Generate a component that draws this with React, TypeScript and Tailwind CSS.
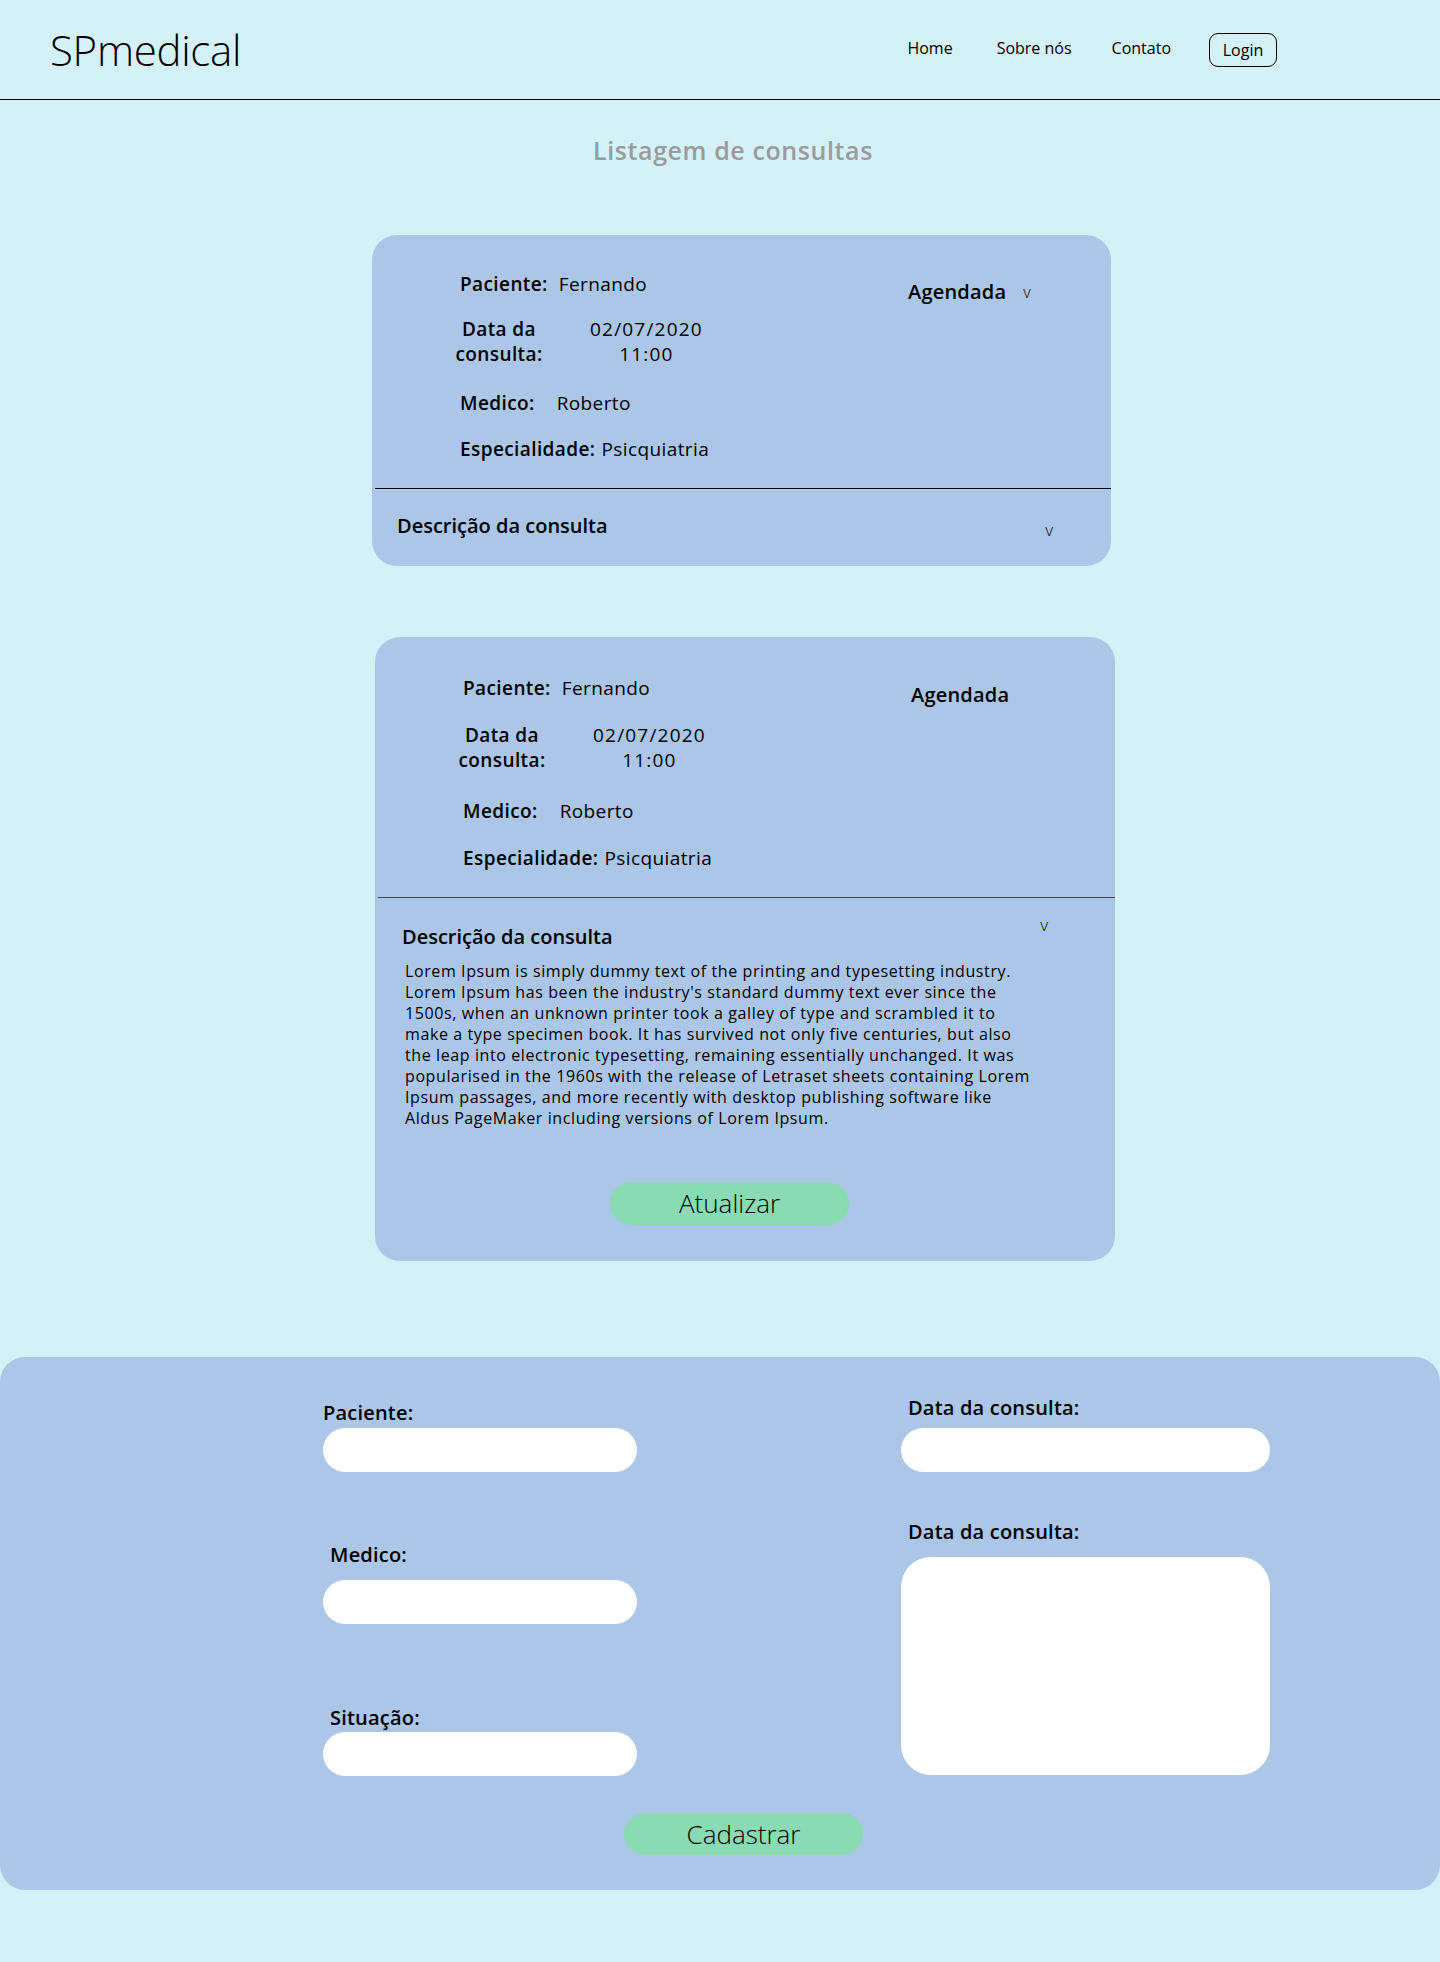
const lorem = [
  'Lorem Ipsum is simply dummy text of the printing and typesetting industry.',
  "Lorem Ipsum has been the industry's standard dummy text ever since the",
  '1500s, when an unknown printer took a galley of type and scrambled it to',
  'make a type specimen book. It has survived not only five centuries, but also',
  'the leap into electronic typesetting, remaining essentially unchanged. It was',
  'popularised in the 1960s with the release of Letraset sheets containing Lorem',
  'Ipsum passages, and more recently with desktop publishing software like',
  'Aldus PageMaker including versions of Lorem Ipsum.'
];

const Header = () => <header className="h-[99px] border-b border-black flex items-center box-content">
    <h1 className="ml-[50px] text-[42px] font-light tracking-[-0.3px]">SPmedical</h1>
    <nav className="ml-auto mr-[163px] flex items-center text-[16px]">
      <a className="mb-[3px]">Home</a>
      <a className="ml-[44px] mb-[3px]">Sobre nós</a>
      <a className="ml-[40px] mb-[3px]">Contato</a>
      <button className="ml-[38px] h-[34px] w-[68px] rounded-[9px] border border-black font-medium">
        Login
      </button>
    </nav>
  </header>;

interface Spacing {
  top: string;
  dataGap: string;
  medicoGap: string;
  espGap: string;
  bottomPad: string;
  statusTop: string;
}

const Details = ({ s, arrow }: { s: Spacing; arrow: boolean }) => <div className={`flex items-start pl-[88px] ${s.top} ${s.bottomPad}`}>
    <div className="w-[448px] flex flex-col text-[19px] leading-[25px] tracking-[0.4px]">
      <div className="flex">
        <span className="font-semibold">Paciente:</span>
        <span className="ml-[11px]">Fernando</span>
      </div>
      <div className={`flex -ml-[6px] ${s.dataGap}`}>
        <span className="w-[90px] text-center font-semibold">
          Data da
          <br />
          consulta:
        </span>
        <span className="ml-[46px] text-center tracking-[1.2px]">
          02/07/2020
          <br />
          11:00
        </span>
      </div>
      <div className={`flex ${s.medicoGap}`}>
        <span className="font-semibold">Medico:</span>
        <span className="ml-[22px]">Roberto</span>
      </div>
      <div className={`flex ${s.espGap}`}>
        <span className="font-semibold">Especialidade:</span>
        <span className="ml-[6px]">Psicquiatria</span>
      </div>
    </div>
    <div className={`flex items-center ${s.statusTop}`}>
      <span className="text-[20px] leading-[26px] font-semibold tracking-[0.2px]">Agendada</span>
      {arrow && <span className="ml-[17px] text-[16px] font-light">v</span>}
    </div>
  </div>;

const ConsultaFechada = () => <section className="ml-[372px] w-[739px] rounded-[25px] bg-[#abc6e6]">
    <Details arrow s={{
    top: 'pt-[37px]',
    dataGap: 'mt-[20px]',
    medicoGap: 'mt-[24px]',
    espGap: 'mt-[21px]',
    bottomPad: 'pb-[26px]',
    statusTop: 'mt-[7px]'
  }} />
    <div className="ml-[3px] border-t border-black" />
    <div className="flex items-start pl-[25px] pt-[24px] pb-[23px]">
      <h3 className="text-[20px] leading-[26px] font-semibold">Descrição da consulta</h3>
      <span className="ml-auto mr-[58px] mt-[4px] text-[17px] leading-[26px] font-light">v</span>
    </div>
  </section>;

const ConsultaAberta = () => <section className="ml-[375px] w-[740px] rounded-[25px] bg-[#abc6e6]">
    <Details arrow={false} s={{
    top: 'pt-[39px]',
    dataGap: 'mt-[22px]',
    medicoGap: 'mt-[26px]',
    espGap: 'mt-[22px]',
    bottomPad: 'pb-[26px]',
    statusTop: 'mt-[6px]'
  }} />
    <div className="ml-[3px] border-t border-[#3f4652]" />
    <div className="pt-[26px] pb-[36px]">
      <div className="flex items-start pl-[27px]">
        <h3 className="text-[20px] leading-[26px] font-semibold">Descrição da consulta</h3>
        <span className="ml-auto mr-[67px] -mt-[12px] text-[17px] leading-[26px] font-light">v</span>
      </div>
      <p className="mt-[11px] pl-[30px] text-[16px] leading-[21px] font-medium tracking-[0.6px] whitespace-nowrap">
        {lorem.map((linha, i) => <span key={i} className="block">{linha}</span>)}
      </p>
      <button className="mt-[53px] ml-[235px] w-[239px] h-[43px] rounded-full bg-[#8adab4] text-[26px] font-light">
        Atualizar
      </button>
    </div>
  </section>;

const Campo = ({ label, gap, labelGap, indent }: { label: string; gap: string; labelGap: string; indent?: boolean }) => <div className={gap}>
    <label className={`block text-[20px] leading-[26px] font-semibold tracking-[0.2px] ${indent ? 'ml-[7px]' : ''}`}>{label}</label>
    <input className={`block w-full h-[44px] rounded-full bg-white outline-none px-5 ${labelGap}`} />
  </div>;

const Formulario = () => <section className="mt-[96px] rounded-[25px] bg-[#abc6e6] pt-[38px] pb-[35px]">
    <div className="flex items-start pl-[323px]">
      <div className="w-[314px] mt-[5px]">
        <Campo label="Paciente:" gap="" labelGap="mt-[2px]" />
        <Campo label="Medico:" gap="mt-[70px]" labelGap="mt-[12px]" indent />
        <Campo label="Situação:" gap="mt-[81px]" labelGap="mt-[1px]" indent />
      </div>
      <div className="ml-[264px] w-[369px]">
        <Campo label="Data da consulta:" gap="" labelGap="mt-[7px]" indent />
        <div className="mt-[47px]">
          <label className="block ml-[7px] text-[20px] leading-[26px] font-semibold tracking-[0.2px]">Data da consulta:</label>
          <textarea className="block mt-[12px] w-full h-[218px] rounded-[30px] bg-white outline-none resize-none p-5" />
        </div>
      </div>
    </div>
    <button className="block mt-[37px] ml-[624px] w-[239px] h-[42px] rounded-full bg-[#8adab4] text-[26px] font-light">
      Cadastrar
    </button>
  </section>;

export default function App() {
  return <div className="min-h-screen bg-[#d3f1f7] text-black font-['Open_Sans',sans-serif] pb-[73px]">
      <Header />
      <main>
        <h2 className="mt-[34px] pl-[26px] text-center text-[25px] leading-[32px] font-semibold tracking-[0.6px] text-[#9b9b9b]">
          Listagem de consultas
        </h2>
        <div className="mt-[69px]">
          <ConsultaFechada />
        </div>
        <div className="mt-[71px]">
          <ConsultaAberta />
        </div>
        <Formulario />
      </main>
    </div>;
}
